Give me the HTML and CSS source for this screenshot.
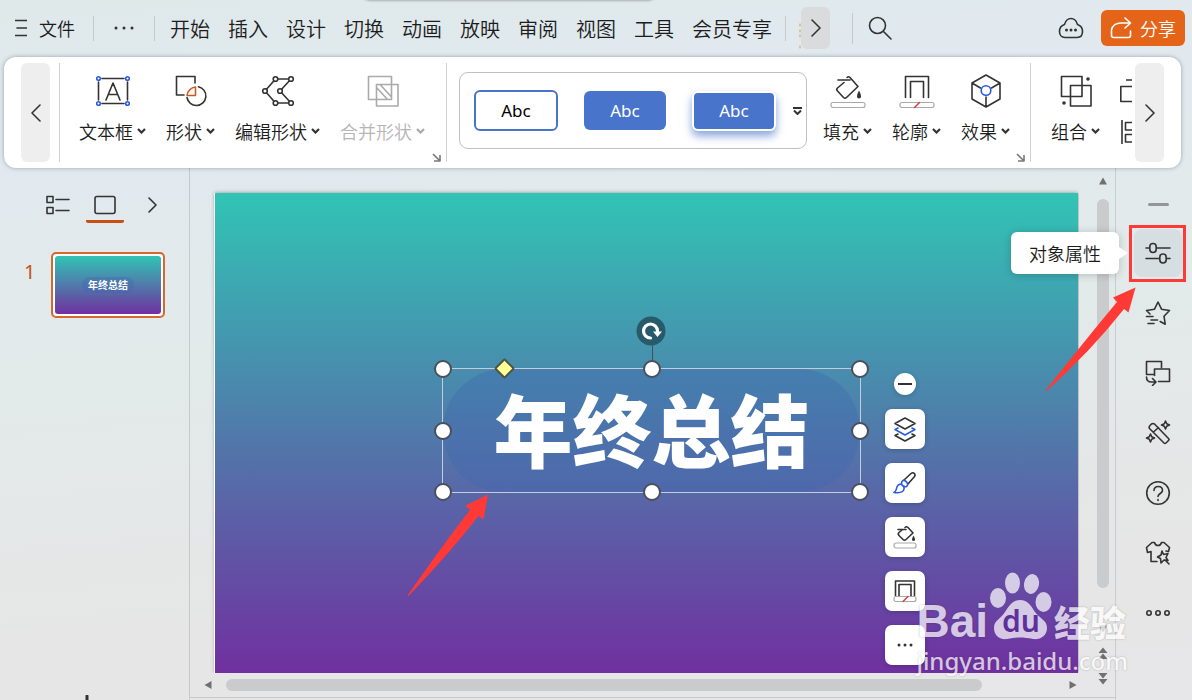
FILE: index.html
```html
<!DOCTYPE html>
<html lang="zh-CN">
<head>
    <meta charset="UTF-8">
    <title>年终总结</title>
    <link rel="stylesheet" href="styles.css">
</head>
<body>
    <div class="doc-tab"></div>
    <header class="menubar">
        <button class="file-btn">
            <svg width="12" height="18" viewBox="0 0 12 18"><path d="M0 1.5h12M2 9h10M0 16.5h12"/></svg>
            文件
        </button>
        <span class="sep"></span>
        <button class="more-btn" aria-label="更多">
            <svg width="20" height="4" viewBox="0 0 20 4"><g class="dots"><circle cx="2" cy="2" r="1.5"/><circle cx="10" cy="2" r="1.5"/><circle cx="18" cy="2" r="1.5"/></g></svg>
        </button>
        <span class="sep"></span>
        <nav class="tabs">
            <button>开始</button>
            <button>插入</button>
            <button>设计</button>
            <button>切换</button>
            <button>动画</button>
            <button>放映</button>
            <button>审阅</button>
            <button>视图</button>
            <button>工具</button>
            <button>会员专享</button>
        </nav>
        <span class="sep"></span>
        <svg class="tab-edge" width="2" height="42" viewBox="0 0 2 42"><path d="M1 17v2M1 23v2M1 28v2M1 39v2"/></svg>
        <button class="tabs-next" aria-label="下一组">
            <svg width="10" height="18" viewBox="0 0 10 18"><path d="M1 1l8 8-8 8"/></svg>
        </button>
        <span class="sep tall"></span>
        <button class="search-btn" aria-label="搜索">
            <svg width="24" height="24" viewBox="0 0 24 24"><circle cx="9.500" cy="9.500" r="8"/><path d="M15.500 15.500l7.500 7.500"/></svg>
        </button>
        <button class="cloud-btn" aria-label="云状态">
            <svg width="26" height="22" viewBox="0 0 26 22"><path d="M7 20.500C3.500 20.500 1.500 18 1.500 14.500 1.500 11 3.500 8.500 6.500 7.500 7.500 4 10 1.500 13 1.500s5.500 2.500 6.500 6c3 1 5 3.500 5 7 0 3.500-2 6-5.500 6z"/><g class="dots"><circle cx="8.500" cy="13" r="1.500"/><circle cx="13" cy="13" r="1.500"/><circle cx="17.500" cy="13" r="1.500"/></g></svg>
        </button>
        <button class="share-btn">
            <svg width="22" height="22" viewBox="0 0 22 22"><path d="M1.500 14v4.500q0 2 2 2h15q2 0 2-2V14M1.500 13C2.500 8.500 6 6 11 6h9M15 1l5.500 5-5.500 5"/></svg>
            分享
        </button>
    </header>

    <section class="ribbon">
        <button class="ribbon-scroll" aria-label="向左">
            <svg width="10" height="18" viewBox="0 0 10 18"><path d="M9 1L1 9l8 8"/></svg>
        </button>
        <div class="group first">
            <button class="tool">
                <svg width="34" height="34" viewBox="0 0 34 34"><path d="M6 4.500h22M6 29.500h22M2.500 8v18M31.500 8v18M10 26l7-17 7 17M12.500 20.500h9"/><g class="blue"><circle cx="2.500" cy="4.500" r="1.800"/><circle cx="31.500" cy="4.500" r="1.800"/><circle cx="2.500" cy="29.500" r="1.800"/><circle cx="31.500" cy="29.500" r="1.800"/></g></svg>
                <span>文本框<svg class="caret" width="9" height="6" viewBox="0 0 9 6"><path d="M1 1l3.500 3.500L8 1"/></svg></span>
            </button>
            <button class="tool">
                <svg width="34" height="34" viewBox="0 0 34 34"><path d="M21 9V2.500H2.500v18.500H10M24.500 12.700A9.500 9.500 0 1 1 13 23.500"/><path class="orange" d="M13 21.500C13.500 17 17 13.500 21.500 13v8.500z"/></svg>
                <span>形状<svg class="caret" width="9" height="6" viewBox="0 0 9 6"><path d="M1 1l3.500 3.500L8 1"/></svg></span>
            </button>
            <button class="tool">
                <svg width="34" height="34" viewBox="0 0 34 34"><path d="M14.500 5H30L19 17l11 12H14.500L4 17z"/><g class="node"><circle cx="14.500" cy="5" r="2.300"/><circle cx="30" cy="5" r="2.300"/><circle cx="19" cy="17" r="2.300"/><circle cx="30" cy="29" r="2.300"/><circle cx="14.500" cy="29" r="2.300"/><circle cx="4" cy="17" r="2.300"/></g></svg>
                <span>编辑形状<svg class="caret" width="9" height="6" viewBox="0 0 9 6"><path d="M1 1l3.500 3.500L8 1"/></svg></span>
            </button>
            <button class="tool" disabled>
                <svg width="34" height="34" viewBox="0 0 34 34"><path d="M2.500 2.500h23v23h-23zM10.500 10.500H32V32H10.500zM11 14l10.500 11.500M14.500 11l11 12"/></svg>
                <span>合并形状<svg class="caret" width="9" height="6" viewBox="0 0 9 6"><path d="M1 1l3.500 3.500L8 1"/></svg></span>
            </button>
            <button class="launcher" aria-label="更多选项"><svg width="9" height="9" viewBox="0 0 9 9"><path d="M1 1l6 6M8 2v6H2"/></svg></button>
        </div>
        <div class="gallery">
            <button class="style-item outlined">Abc</button>
            <button class="style-item filled">Abc</button>
            <button class="style-item raised">Abc</button>
            <button class="gallery-more" aria-label="更多样式"><svg width="9" height="8" viewBox="0 0 9 8"><path d="M0 1h9M1 3.500L4.500 7 8 3.500"/></svg></button>
        </div>
        <div class="group">
            <button class="tool">
                <svg width="36" height="34" viewBox="0 0 36 34"><path d="M14 8.500L7.500 14q-1.500 1.500 0 3l6 6.500q1.500 1.500 3 0L28 12.500 20 3.500q-1.500-1.500-3 0M8 6h12"/><path class="solid" d="M29 16.500c1.500 3 2 4.500 2 6a2 2 0 0 1-4 0c0-1.500.5-3 2-6z"/><rect class="bar" x="1" y="28.500" width="34" height="5" rx="2"/></svg>
                <span>填充<svg class="caret" width="9" height="6" viewBox="0 0 9 6"><path d="M1 1l3.500 3.500L8 1"/></svg></span>
            </button>
            <button class="tool">
                <svg width="36" height="34" viewBox="0 0 36 34"><path d="M6.500 23.500v-21h23v21M11.500 23.500v-16h13v16"/><rect class="bar" x="1" y="28.500" width="34" height="5" rx="2"/><path class="red" d="M15.500 33.500l5-5"/></svg>
                <span>轮廓<svg class="caret" width="9" height="6" viewBox="0 0 9 6"><path d="M1 1l3.500 3.500L8 1"/></svg></span>
            </button>
            <button class="tool">
                <svg width="34" height="34" viewBox="0 0 34 34"><path d="M17 1l14 8v16l-14 8-14-8V9zM3 9l8.500 5M31 9l-8.500 5M17 23v10"/><circle class="blue" cx="17" cy="16.500" r="4.800"/></svg>
                <span>效果<svg class="caret" width="9" height="6" viewBox="0 0 9 6"><path d="M1 1l3.500 3.500L8 1"/></svg></span>
            </button>
            <button class="launcher" aria-label="更多选项"><svg width="9" height="9" viewBox="0 0 9 9"><path d="M1 1l6 6M8 2v6H2"/></svg></button>
        </div>
        <div class="group last">
            <button class="tool">
                <svg width="34" height="34" viewBox="0 0 34 34"><path d="M2.500 2.500H23v20H2.500zM11.500 11.500H32V32H11.500z"/><g class="dots"><circle cx="29" cy="5" r="1.800"/><circle cx="5" cy="29" r="1.800"/></g></svg>
                <span>组合<svg class="caret" width="9" height="6" viewBox="0 0 9 6"><path d="M1 1l3.500 3.500L8 1"/></svg></span>
            </button>
            <svg class="cut-icons" width="12" height="70" viewBox="0 0 12 70"><path d="M6 6h6M12 12.500H.8v15H12M2 46v24M12 48.500H5.500v7.500H12M12 60.500H5.500V68H12"/></svg>
        </div>
        <button class="ribbon-scroll right" aria-label="向右">
            <svg width="10" height="18" viewBox="0 0 10 18"><path d="M1 1l8 8-8 8"/></svg>
        </button>
    </section>

    <main class="workspace">
        <aside class="outline-pane">
            <div class="pane-tabs">
                <button aria-label="大纲"><svg width="24" height="20" viewBox="0 0 24 20"><path d="M1 1.500h6v6H1zM1 12.500h6v6H1zM10 4.500h13M10 15.500h13"/></svg></button>
                <button class="active" aria-label="幻灯片"><svg width="22" height="20" viewBox="0 0 22 20"><rect x="1" y="1.500" width="20" height="17" rx="2"/></svg></button>
                <button aria-label="收起"><svg width="9" height="16" viewBox="0 0 9 16"><path d="M1 1l7 7-7 7"/></svg></button>
            </div>
            <div class="thumb-row">
                <span class="thumb-no">1</span>
                <button class="thumb"><span class="thumb-slide"><span>年终总结</span></span></button>
            </div>
            <button class="add-slide" aria-label="新建幻灯片"><svg width="18" height="18" viewBox="0 0 18 18"><path d="M9 1v16M1 9h16"/></svg></button>
        </aside>

        <section class="editor">
            <div class="stage">
                <div class="slide">
                    <div class="shape">
                        <h1>年终总结</h1>
                        <i class="stem"></i>
                        <i class="handle nw"></i><i class="handle n"></i><i class="handle ne"></i>
                        <i class="handle w"></i><i class="handle e"></i>
                        <i class="handle sw"></i><i class="handle s"></i><i class="handle se"></i>
                        <i class="adjust"></i>
                        <svg class="rotate" width="30" height="30" viewBox="0 0 30 30"><circle class="disc" cx="15" cy="15" r="14.500"/><path class="turn" d="M14.500 22A7 7 0 1 1 21.500 15"/><path class="tip" d="M17 15.500h9l-4.500 5.500z"/></svg>
                    </div>
                    <svg class="pointer" width="82" height="102" viewBox="0 0 82 102"><path d="M81 .5L58.500 11.500l4.500 4.500Q38 48 .5 101.500L1.500 102Q42 60 71.500 22l5 3.500z"/></svg>
                    <div class="quick-tools">
                        <button class="fold" aria-label="收起"><svg width="14" height="4" viewBox="0 0 14 4"><path d="M0 2h14"/></svg></button>
                        <button aria-label="图层"><svg width="24" height="26" viewBox="0 0 24 26"><path d="M12 2l10 5.500L12 13 2 7.500z"/><path class="blue" d="M5 12l-3 1.500L12 19l10-5.500-3-1.500"/><path d="M5 18l-3 1.500L12 25l10-5.500-3-1.500"/></svg></button>
                        <button aria-label="格式刷"><svg width="24" height="24" viewBox="0 0 24 24"><path d="M11 9l7-6.500c2.500-2 5 .5 3.500 3L15 13"/><path class="blue" d="M10 9.500c2-.5 5 2 4.500 4.500-.5 2-2.500 2-3 1.500-2-.5-3-2-3-3 0-1.500.5-2.500 1.500-3zM8.500 13c-3 0-4.500 1.500-5 4.500-.2 2-.8 3-2.500 4 4.500.5 9.500 0 10-3.500.2-1 0-1.500-.2-2"/></svg></button>
                        <button aria-label="填充"><svg width="24" height="26" viewBox="0 0 24 26"><path d="M9 6L6 8.500q-1.500 1.500 0 3l4 4q1.500 1.500 3 0l7-6.500-5-5.500q-1.500-1.500-3 0M5 5.500h8"/><path class="solid" d="M20.500 11.500c1 2 1.500 3 1.500 4a1.500 1.500 0 0 1-3 0c0-1 .5-2 1.500-4z"/><rect class="bar" x="1" y="19" width="22" height="5" rx="2"/></svg></button>
                        <button aria-label="轮廓"><svg width="24" height="26" viewBox="0 0 24 26"><path d="M2.500 18V3h19v15M6 18V6.500h12V18"/><rect class="bar" x="1" y="18.500" width="22" height="5" rx="2"/><path class="red" d="M10 23.500l5-5"/></svg></button>
                        <button aria-label="更多"><svg width="16" height="4" viewBox="0 0 16 4"><g class="dots"><circle cx="2" cy="2" r="1.500"/><circle cx="8" cy="2" r="1.500"/><circle cx="14" cy="2" r="1.500"/></g></svg></button>
                    </div>
                </div>
            </div>
            <div class="vscroll">
                <svg class="arrow" width="12" height="8" viewBox="0 0 12 8"><path d="M2 7.500L6 .5l4 7z"/></svg>
                <div class="bar-thumb"></div>
                <svg class="arrow" width="12" height="8" viewBox="0 0 12 8"><path d="M2 .5l4 7 4-7z"/></svg>
                <svg class="arrow" width="12" height="12" viewBox="0 0 12 12"><path d="M1.500 6L6 .5 10.500 6zM1.500 12L6 6.500l4.500 5.500z"/></svg>
                <svg class="arrow" width="12" height="12" viewBox="0 0 12 12"><path d="M1.500 0h9L6 5.500zM1.500 6h9L6 11.500z"/></svg>
            </div>
            <div class="hscroll">
                <svg class="arrow" width="8" height="10" viewBox="0 0 8 10"><path d="M7.500 1v8L.5 5z"/></svg>
                <div class="bar-thumb"></div>
                <svg class="arrow" width="8" height="10" viewBox="0 0 8 10"><path d="M.5 1v8l7-4z"/></svg>
            </div>
        </section>

        <aside class="sidebar">
            <button class="grip" aria-label="折叠"></button>
            <div class="marked">
                <button class="side-btn active" aria-label="对象属性"><svg width="26" height="26" viewBox="0 0 26 26"><path d="M1 8h3.500M11.500 8H25M1 18.500h13.500M21.500 18.500H25"/><rect x="4.800" y="3.500" width="6.400" height="9" rx="3.200"/><rect x="14.800" y="14" width="6.400" height="9" rx="3.200"/></svg></button>
                <div class="tooltip">对象属性</div>
                <svg class="pointer" width="91" height="104" viewBox="0 0 91 104"><path d="M90.500.5L68 10.500l4 4.500Q46 46 .5 103.500L1.500 104Q46 64 79 22l4.500 3.500z"/></svg>
            </div>
            <button class="side-btn" aria-label="动画"><svg width="26" height="26" viewBox="0 0 26 26"><path d="M5 14l-3.500-3.500 8-1.300L13 2l3.500 7.200 8 1.300-5.500 5.700 1.200 8-5-2.700M1.500 16.500H8M6 20h6.500M3 23.500h6"/></svg></button>
            <button class="side-btn" aria-label="切换"><svg width="26" height="26" viewBox="0 0 26 26"><path d="M9 14.500H1.500v-13h15v6M9.500 9h15v12.500H13.500M9.500 9v6.500M1.500 17c0 3 2 5 5 5h4M7.500 18.500l3.500 3.500-3.500 3.500"/></svg></button>
            <button class="side-btn" aria-label="智能美化"><svg width="26" height="26" viewBox="0 0 26 26"><path d="M4.500 8.500q-1-1.500.5-3l1.500-1.500q1.500-1 3 0L23.500 18.500q1 1 0 2l-2.500 2.500q-1 1-2 0zM8.500 12l5-4.500M20.500 1l1.200 2.800 2.800 1.200-2.800 1.200-1.200 2.800-1.200-2.800L16.500 5l2.800-1.200zM5.500 14l1.200 2.800 2.800 1.200-2.800 1.200-1.200 2.800-1.200-2.800L1.500 18l2.800-1.200z"/></svg></button>
            <button class="side-btn" aria-label="帮助"><svg width="26" height="26" viewBox="0 0 26 26"><circle cx="13" cy="13" r="11.300"/><path d="M9 10.500c0-5.500 8.500-5 8.500 0 0 3-4.500 3-4.500 6M13 19.500v1"/></svg></button>
            <button class="side-btn" aria-label="主题"><svg width="26" height="26" viewBox="0 0 26 26"><path d="M12 21.500H6v-10l-3.500 1-1-5L7 2.500h2.500c1 4 6 4 7 0H19l5.500 5-1 4-2.500-.5M17 11l1.500 3.500 4.500-1-2 4 2 3-4-.5-3 3-.5-4.500-3-1.500 3.500-2zM20 20l4 4"/></svg></button>
            <button class="side-btn" aria-label="更多"><svg width="26" height="26" viewBox="0 0 26 26"><circle cx="4" cy="13" r="2.200"/><circle cx="13" cy="13" r="2.200"/><circle cx="22" cy="13" r="2.200"/></svg></button>
        </aside>
    </main>

    <div class="watermark">
        <div class="brand">
            <span class="bai">Bai</span>
            <span class="paw">
                <svg width="62" height="68" viewBox="0 0 62 68"><ellipse cx="8" cy="26" rx="8" ry="10"/><ellipse cx="22.500" cy="11" rx="7.500" ry="10.500"/><ellipse cx="41.500" cy="12" rx="7.500" ry="10" transform="rotate(12 41.500 12)"/><ellipse cx="53.500" cy="30" rx="8" ry="10"/><path d="M30 28c8 0 11 6 15 12 5 7 12 8 12 16 0 8-7 12-14 11-5-1-9-1.500-13-1.500S22 66 17 67C9 68 4 63 4 56c0-8 7-9 11-16 4-6 7-12 15-12z"/></svg>
                <b>du</b>
            </span>
            <span class="jingyan">经验</span>
        </div>
        <div class="site">jingyan.baidu.com</div>
    </div>
</body>
</html>
```
FILE: styles.css
```css
* {
    box-sizing: border-box;
}

body {
    position: relative;
    display: flex;
    flex-direction: column;
    height: 100vh;
    margin: 0;
    overflow: hidden;
    font-family: "Noto Sans CJK SC", sans-serif;
    font-size: 18px;
    font-weight: 350;
    color: #1c1c1c;
    background: linear-gradient(175deg, #dfe9ea 0%, #e1e9ef 20%, #e2eaea 45%, #e6e6e6 80%, #e7e6e8 100%);
}

button {
    display: flex;
    align-items: center;
    justify-content: center;
    padding: 0;
    border: 0;
    background: none;
    font: inherit;
    color: inherit;
}

svg {
    display: block;
    flex: none;
    fill: none;
    stroke: #333;
    stroke-width: 1.6;
    stroke-linejoin: round;
    stroke-linecap: round;
}

.dots, .solid {
    fill: #333;
    stroke: none;
}

.blue {
    stroke: #2b5be0;
}

.orange {
    stroke: #d0581c;
}

.bar {
    fill: #fff;
    stroke: #aaa;
    stroke-width: 1.2;
}

.red {
    stroke: #e0393e;
    stroke-width: 1.4;
}

.doc-tab {
    position: absolute;
    top: -10px;
    left: 364px;
    width: 290px;
    height: 10px;
    border-radius: 8px;
    box-shadow: 0 0 3px rgba(0, 0, 0, 0.5);
}

/* 菜单栏 */
.menubar {
    display: flex;
    flex: none;
    align-items: center;
    height: 57px;
    padding: 0 7px 1px 15px;
    white-space: nowrap;
}

.file-btn {
    gap: 12px;
    margin-right: 18px;
}

.sep {
    width: 1px;
    height: 25px;
    background: #c3c9cc;
}

.sep.tall {
    height: 31px;
    margin: 0 15px 0 22px;
}

.more-btn {
    width: 60px;
    height: 30px;
}

.tabs {
    display: flex;
    gap: 18px;
    margin: 0 13px 0 15px;
    font-size: 20px;
}

.tab-edge {
    margin-left: 13px;
    stroke: #dc9a3c;
    stroke-width: 1;
}

.tabs-next {
    width: 29px;
    height: 42px;
    border-radius: 6px;
    background: #dadbdc;
}

.cloud-btn {
    margin: 0 17px 0 auto;
}

.share-btn {
    gap: 8px;
    width: 84px;
    height: 36px;
    border-radius: 6px;
    background: #e4651a;
    color: #fff;
}

.share-btn svg {
    stroke: #fff;
}

/* 功能区 */
.ribbon {
    display: flex;
    flex: none;
    height: 111px;
    margin: 0 11px 0 4px;
    padding: 6px 17px;
    border-radius: 12px;
    background: #fff;
    box-shadow: 0 0 4px rgba(60, 80, 90, 0.45);
    white-space: nowrap;
    z-index: 1;
}

.ribbon-scroll {
    flex: none;
    width: 29px;
    border-radius: 6px;
    background: #eee;
}

.ribbon-scroll.right {
    margin-left: auto;
}

.group {
    position: relative;
    display: flex;
    flex: none;
    align-items: flex-start;
    gap: 20px;
    padding: 11px 20px 0 16px;
    border-right: 1px solid #d0d0d0;
}

.group.first {
    margin-left: 9px;
    padding-left: 19px;
    padding-right: 21px;
    border-left: 1px solid #d0d0d0;
}

.group.last {
    flex: 0 1 auto;
    padding: 11px 0 0 20px;
    border: 0;
    overflow: hidden;
}

.tool {
    flex-direction: column;
    gap: 11px;
    line-height: 24px;
}

.tool span {
    display: flex;
    align-items: center;
    gap: 4px;
}

.caret {
    stroke-width: 2.2;
    stroke-linecap: butt;
    stroke-linejoin: miter;
}

.node {
    fill: #fff;
}

.tool:disabled {
    color: #b5b5b5;
}

.tool:disabled svg {
    stroke: #aaa;
}

.cut-icons {
    stroke-linecap: butt;
}

.launcher {
    position: absolute;
    right: 5px;
    bottom: 0;
}

.launcher svg {
    stroke: #777;
    stroke-linecap: butt;
}

.gallery {
    display: flex;
    flex: none;
    align-items: center;
    gap: 26px;
    width: 348px;
    height: 77px;
    margin: 9px 0 0 12px;
    padding-left: 14px;
    border: 1px solid #c0c0c0;
    border-radius: 9px;
}

.style-item {
    width: 82px;
    height: 39px;
    border-radius: 6px;
    background: #4874cb;
    color: #fff;
    font-family: "Noto Sans", sans-serif;
    font-size: 17px;
    font-weight: 400;
}

.style-item.outlined {
    width: 84px;
    height: 41px;
    border: 2px solid #4874cb;
    background: #fff;
    color: #000;
}

.style-item.raised {
    width: 84px;
    height: 40px;
    border: 2px solid #fff;
    box-shadow: 0 5px 9px rgba(72, 116, 203, 0.65);
}

.gallery-more {
    margin-left: -9px;
}

.gallery-more svg {
    stroke-width: 2;
    stroke-linecap: butt;
    stroke-linejoin: miter;
}

/* 工作区 */
.workspace {
    display: flex;
    flex: 1;
    min-height: 0;
}

.outline-pane {
    display: flex;
    flex: none;
    flex-direction: column;
    width: 190px;
    border-right: 1px solid #c4cacc;
}

.pane-tabs {
    display: flex;
    gap: 16px;
    margin: 19px 0 0 46px;
}

.pane-tabs button {
    height: 36px;
}

.pane-tabs .active {
    width: 38px;
    border-bottom: 3px solid #c75113;
    border-top: 3px solid transparent;
    border-radius: 2px;
}

.pane-tabs button:last-child {
    margin-left: 8px;
}

.thumb-row {
    display: flex;
    align-items: flex-start;
    margin: 29px 0 0 24px;
}

.thumb-no {
    width: 27px;
    font-family: "Noto Sans", sans-serif;
    font-size: 20px;
    font-weight: 400;
    line-height: 40px;
    color: #c75113;
}

.thumb {
    width: 114px;
    height: 66px;
    padding: 2px;
    border: 2px solid #d5682c;
    border-radius: 5px;
    background: #fff;
}

.thumb-slide {
    display: flex;
    align-items: center;
    justify-content: center;
    width: 100%;
    height: 100%;
    border-radius: 3px;
    background: linear-gradient(#31c4b5, #7030a0);
}

.thumb-slide span {
    padding: 0 6px;
    border-radius: 8px;
    background: rgba(66, 104, 176, 0.4);
    color: #fff;
    font-size: 10px;
    font-weight: 700;
    line-height: 16px;
}

.add-slide {
    width: 18px;
    margin: auto 0 -13px 78px;
}

.add-slide svg {
    stroke-width: 3;
}

/* 编辑区 */
.editor {
    display: grid;
    flex: 1;
    grid-template-columns: 1fr 36px;
    grid-template-rows: 1fr 24px;
    min-width: 0;
    margin-bottom: 2px;
    border-bottom: 1px solid #c8c8ca;
}

.stage {
    display: flex;
    min-width: 0;
    padding: 25px 1px 0 25px;
    overflow: hidden;
}

.slide {
    position: relative;
    flex: 1;
    background: linear-gradient(#31c4b5, #7030a0);
    box-shadow: -1px 0 0 #fff, 0 0 4px rgba(0, 0, 0, 0.4);
}

.shape {
    position: absolute;
    top: 175px;
    left: 227px;
    display: flex;
    align-items: center;
    justify-content: center;
    width: 419px;
    height: 125px;
    border: 1px solid #c3cddb;
}

.shape::before {
    content: "";
    position: absolute;
    inset: 0;
    border-radius: 61px;
    background: rgba(66, 104, 176, 0.4);
}

.shape h1 {
    position: relative;
    margin: 0;
    padding-bottom: 6px;
    color: #fff;
    font-size: 79px;
    font-weight: 900;
    line-height: 116px;
    white-space: nowrap;
}

.handle {
    position: absolute;
    width: 18px;
    height: 18px;
    margin: -9px;
    border: 2px solid #4a505a;
    border-radius: 50%;
    background: #fff;
}

.nw, .n, .ne {
    top: 0;
}

.w, .e {
    top: 50%;
}

.sw, .s, .se {
    top: 100%;
}

.nw, .w, .sw {
    left: 0;
}

.n, .s {
    left: 50%;
}

.ne, .e, .se {
    left: 100%;
}

.adjust {
    position: absolute;
    top: -8px;
    left: 54px;
    width: 15px;
    height: 15px;
    border: 2px solid #4d5445;
    border-radius: 2px;
    background: #ffff96;
    transform: rotate(45deg);
}

.stem {
    position: absolute;
    top: -26px;
    left: 50%;
    width: 1px;
    height: 20px;
    background: #40505c;
}

.rotate {
    position: absolute;
    top: -53px;
    left: calc(50% - 16px);
}

.rotate .disc {
    fill: #285b6a;
    stroke: none;
}

.rotate .turn {
    stroke: #fff;
    stroke-width: 3.2;
}

.rotate .tip {
    fill: #fff;
    stroke: none;
}

.pointer {
    position: absolute;
    fill: #ff3a36;
    stroke: none;
}

.slide .pointer {
    top: 301px;
    left: 192px;
}

.quick-tools {
    position: absolute;
    top: 180px;
    left: 670px;
    display: flex;
    flex-direction: column;
    align-items: center;
    gap: 14px;
}

.quick-tools button {
    width: 40px;
    height: 40px;
    border-radius: 7px;
    background: #fff;
    box-shadow: 0 1px 5px rgba(0, 0, 0, 0.2);
}

.quick-tools .fold {
    width: 22px;
    height: 22px;
    border-radius: 50%;
}

.fold svg {
    stroke-width: 2;
    stroke-linecap: butt;
}

.arrow {
    fill: #707070;
    stroke: none;
}

.bar-thumb {
    border-radius: 6px;
    background: #cacbcc;
}

.vscroll {
    display: flex;
    flex-direction: column;
    align-items: flex-end;
    grid-column: 2;
    grid-row: 1 / 3;
    padding: 9px 6px 12px 0;
}

.vscroll .bar-thumb {
    flex: 1;
    width: 12px;
    margin: 14px 0 37px;
}

.vscroll .arrow + .arrow {
    margin-top: 14px;
}

.hscroll {
    display: flex;
    align-items: center;
    grid-column: 1;
    grid-row: 2;
    padding: 0 2px 0 14px;
}

.hscroll .bar-thumb {
    flex: 1;
    height: 12px;
    margin: 0 87px 0 14px;
}

/* 右侧任务栏 */
.sidebar {
    display: flex;
    flex: none;
    flex-direction: column;
    align-items: center;
    gap: 12px;
    width: 77px;
    padding: 35px 0 0 8px;
    border-left: 1px solid #c8cdcf;
}

.grip {
    width: 21px;
    height: 3px;
    margin-bottom: 11px;
    border-radius: 2px;
    background: #939596;
}

.side-btn {
    width: 48px;
    height: 48px;
    border-radius: 8px;
}

.side-btn.active {
    background: #d6dee1;
}

.marked {
    position: relative;
}

.marked::before {
    content: "";
    position: absolute;
    inset: -4px -4px -5px -5px;
    border: 3px solid #ff3a36;
}

.marked .pointer {
    top: 58px;
    right: 46px;
}

.tooltip {
    position: absolute;
    top: 3px;
    right: 63px;
    width: 108px;
    border-radius: 6px;
    background: #fff;
    box-shadow: 0 1px 8px rgba(0, 0, 0, 0.2);
    line-height: 42px;
    text-align: center;
}

.tooltip::after {
    content: "";
    position: absolute;
    top: 15px;
    left: 100%;
    border: 6px solid transparent;
    border-left: 9px solid #fff;
    border-right: 0;
}

/* 水印 */
.watermark {
    position: absolute;
    right: 64px;
    bottom: 24px;
    z-index: 2;
    opacity: 0.72;
    color: #fff;
    text-shadow: 0 0 2px rgba(0, 0, 0, 0.35);
    pointer-events: none;
}

.brand {
    display: flex;
    align-items: flex-end;
    gap: 2px;
    height: 68px;
    margin-bottom: 6px;
}

.bai {
    font-family: "Liberation Sans", sans-serif;
    font-size: 46px;
    font-weight: 700;
    line-height: 38px;
}

.paw {
    position: relative;
}

.paw svg {
    fill: #fff;
    stroke: none;
}

.paw b {
    position: absolute;
    bottom: 3px;
    left: 0;
    width: 100%;
    color: #5a2a98;
    font-family: "Noto Sans", sans-serif;
    font-size: 30px;
    font-weight: 600;
    line-height: 32px;
    text-align: center;
    text-shadow: none;
}

.jingyan {
    font-size: 36px;
    font-weight: 900;
    line-height: 38px;
}

.site {
    font-family: "Noto Sans", sans-serif;
    font-size: 24px;
    font-weight: 500;
    line-height: 30px;
}
```
